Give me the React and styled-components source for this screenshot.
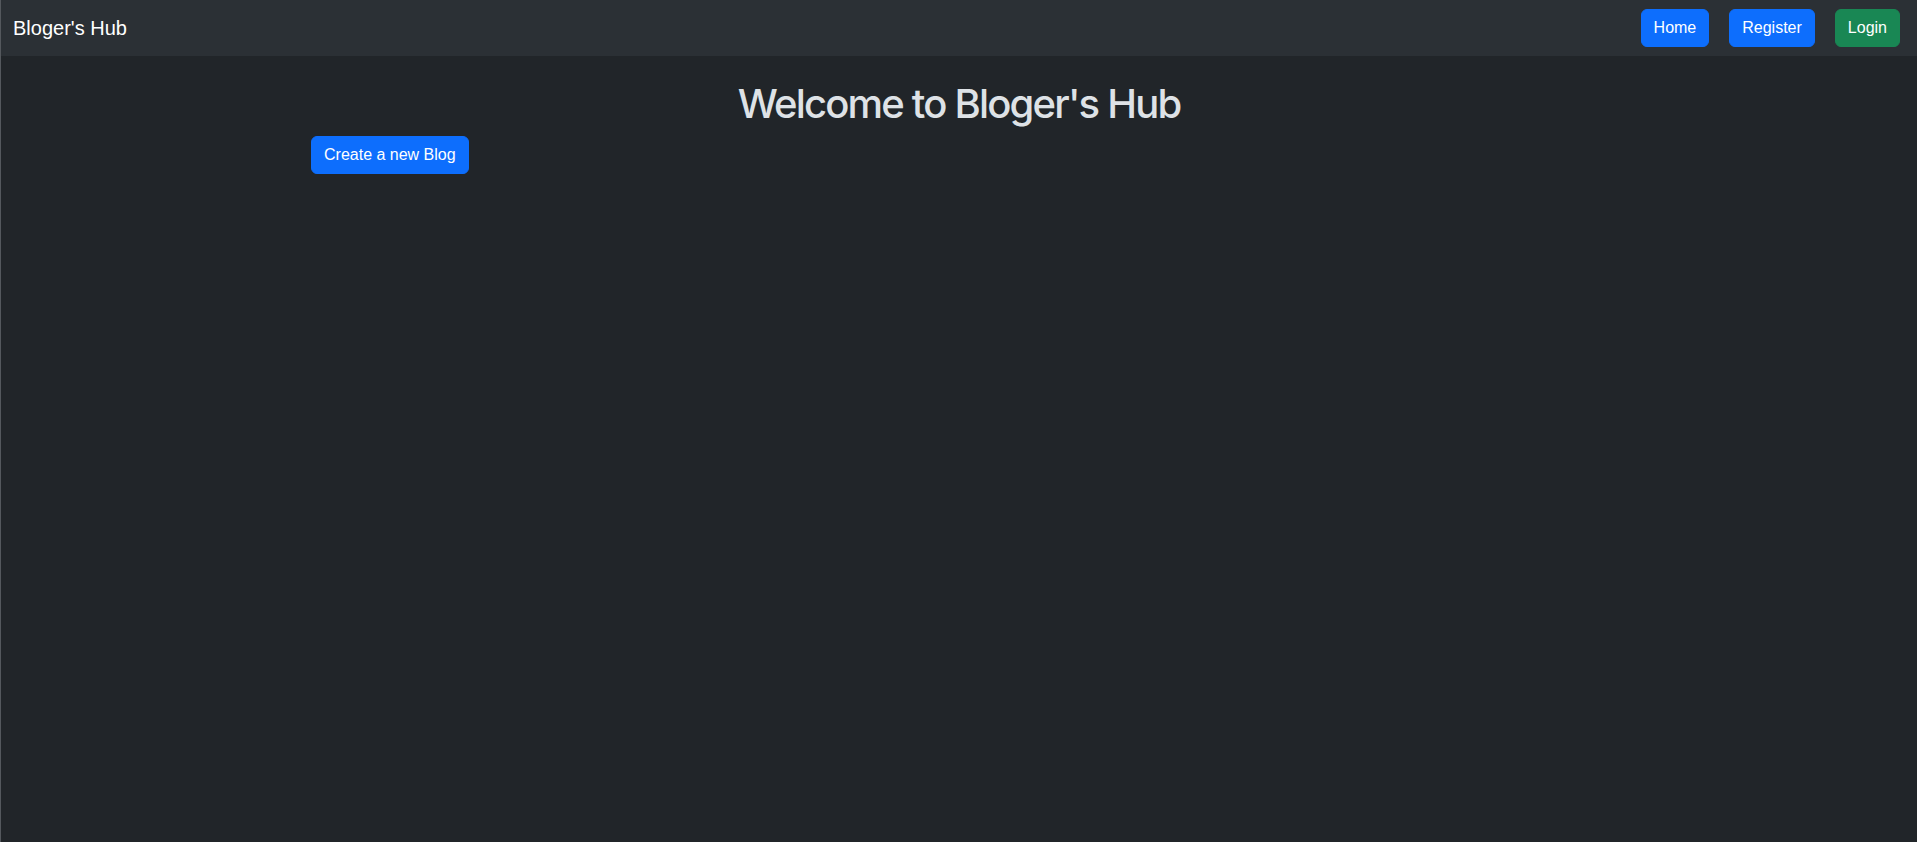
import React from "react";
import styled, { createGlobalStyle } from "styled-components";

const Colors = {
  body: "#212529",
  nav: "#2b3035",
  text: "#dee2e6",
  white: "#ffffff",
  primary: "#0d6efd",
  success: "#198754",
};

const GlobalStyle = createGlobalStyle`
  html, body {
    margin: 0;
    padding: 0;
    background: ${Colors.body};
  }
  body {
    font-family: "Liberation Sans", Arial, sans-serif;
    font-size: 16px;
    line-height: 1.5;
    color: ${Colors.text};
  }
  * {
    box-sizing: border-box;
  }
`;

const Page = styled.div`
  min-height: 842px;
  background: ${Colors.body};
  border-left: 1px solid #54585d;
`;

const Navbar = styled.nav`
  height: 56px;
  background: ${Colors.nav};
  display: flex;
  align-items: center;
  justify-content: space-between;
  padding: 0 17px 0 12px;
`;

const Brand = styled.a`
  color: ${Colors.white};
  font-size: 20px;
  line-height: 30px;
  text-decoration: none;
  cursor: pointer;
`;

const NavLinks = styled.div`
  display: flex;
  align-items: center;
  gap: 20px;
`;

const Button = styled.button`
  font-family: inherit;
  font-size: 16px;
  line-height: 24px;
  padding: 6px 12px;
  height: 38px;
  border: 1px solid ${(p) => (p.$variant === "success" ? Colors.success : Colors.primary)};
  background: ${(p) => (p.$variant === "success" ? Colors.success : Colors.primary)};
  color: ${Colors.white};
  border-radius: 6px;
  cursor: pointer;
`;

const Container = styled.main`
  max-width: 1320px;
  margin: 0 auto;
  padding: 0 12px;
`;

const Title = styled.h1`
  margin: 24px 0 8px;
  font-family: Inter, "Liberation Sans", sans-serif;
  font-size: 40px;
  font-weight: 500;
  letter-spacing: -1.8px;
  line-height: 48px;
  text-align: center;
  color: ${Colors.text};
`;

const App = () => {
  return (
    <>
      <GlobalStyle />
      <Page>
        <Navbar>
          <Brand>Bloger's Hub</Brand>
          <NavLinks>
            <Button>Home</Button>
            <Button>Register</Button>
            <Button $variant="success">Login</Button>
          </NavLinks>
        </Navbar>
        <Container>
          <Title>Welcome to Bloger's Hub</Title>
          <Button>Create a new Blog</Button>
        </Container>
      </Page>
    </>
  );
};

export default App;
